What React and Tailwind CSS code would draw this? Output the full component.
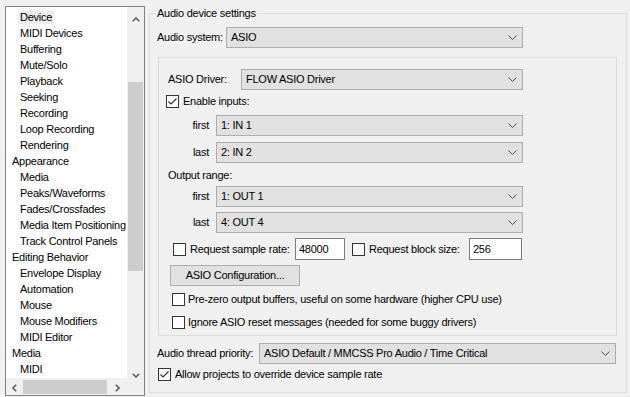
import React from "react";

const tree = [
  ["Device", 1, true],
  ["MIDI Devices", 1],
  ["Buffering", 1],
  ["Mute/Solo", 1],
  ["Playback", 1],
  ["Seeking", 1],
  ["Recording", 1],
  ["Loop Recording", 1],
  ["Rendering", 1],
  ["Appearance", 0],
  ["Media", 1],
  ["Peaks/Waveforms", 1],
  ["Fades/Crossfades", 1],
  ["Media Item Positioning", 1],
  ["Track Control Panels", 1],
  ["Editing Behavior", 0],
  ["Envelope Display", 1],
  ["Automation", 1],
  ["Mouse", 1],
  ["Mouse Modifiers", 1],
  ["MIDI Editor", 1],
  ["Media", 0],
  ["MIDI", 1],
];

function Chevron() {
  return (
    <svg width="9" height="5" viewBox="0 0 9 5" className="shrink-0">
      <polyline points="0.5,0.5 4.5,4.5 8.5,0.5" fill="none" stroke="#4a4a4a" strokeWidth="1" />
    </svg>
  );
}

function Select({ value, className }) {
  return (
    <div className={"h-[21px] border border-[#adadad] bg-[#e1e1e1] flex items-center pl-[4px] pr-[5px] " + className}>
      <span className="flex-1 whitespace-nowrap">{value}</span>
      <Chevron />
    </div>
  );
}

function Check({ checked }) {
  return (
    <div className="w-[13px] h-[13px] border border-[#333333] bg-white shrink-0 flex items-center justify-center">
      {checked && (
        <svg width="11" height="11" viewBox="0 0 11 11">
          <polyline points="1.5,5.5 4,8 9.5,2.5" fill="none" stroke="#333333" strokeWidth="1.2" />
        </svg>
      )}
    </div>
  );
}

function ArrowUp() {
  return (
    <svg width="8" height="5" viewBox="0 0 8 5">
      <polyline points="0.8,4.2 4,1 7.2,4.2" fill="none" stroke="#606060" strokeWidth="1.6" />
    </svg>
  );
}
function ArrowDown() {
  return (
    <svg width="8" height="5" viewBox="0 0 8 5">
      <polyline points="0.8,0.8 4,4 7.2,0.8" fill="none" stroke="#606060" strokeWidth="1.6" />
    </svg>
  );
}
function ArrowLeft() {
  return (
    <svg width="5" height="8" viewBox="0 0 5 8">
      <polyline points="4.2,0.8 1,4 4.2,7.2" fill="none" stroke="#606060" strokeWidth="1.6" />
    </svg>
  );
}
function ArrowRight() {
  return (
    <svg width="5" height="8" viewBox="0 0 5 8">
      <polyline points="0.8,0.8 4,4 0.8,7.2" fill="none" stroke="#606060" strokeWidth="1.6" />
    </svg>
  );
}

export default function App() {
  return (
    <div
      className="w-[630px] h-[397px] bg-[#f0f0f0] flex text-black text-[11px] leading-[13px] tracking-[-0.25px] overflow-hidden"
      style={{ fontFamily: '"Liberation Sans", Arial, sans-serif' }}
    >
      {/* Left tree panel */}
      <div className="ml-[5px] mt-[6px] w-[140px] h-[390px] border border-[#828282] bg-white flex flex-col shrink-0">
        <div className="flex h-[371px]">
          <div className="flex-1 overflow-hidden pt-[2px]">
            {tree.map(([label, lvl, sel], i) => (
              <div
                key={i}
                className={"h-[16px] flex items-center whitespace-nowrap " + (lvl ? "pl-[12px]" : "pl-[4px]")}
              >
                <span className={"px-[2px] leading-[13px] " + (sel ? "bg-[#ececec]" : "")}>{label}</span>
              </div>
            ))}
          </div>
          <div className="w-[17px] bg-[#f0f0f0] flex flex-col">
            <div className="h-[19px] flex items-end justify-center pb-[4px]">
              <ArrowUp />
            </div>
            <div className="h-[56px]" />
            <div className="h-[189px] mx-[1px] bg-[#cdcdcd]" />
            <div className="flex-1 flex items-end justify-center pb-[0px]">
              <ArrowDown />
            </div>
          </div>
        </div>
        <div className="h-[17px] bg-[#f0f0f0] flex items-center">
          <div className="w-[17px] flex items-center justify-center pt-[2px]">
            <ArrowLeft />
          </div>
          <div className="w-[84px] h-[14px] mt-[1px] bg-[#cdcdcd]" />
          <div className="w-[20px] flex items-center justify-center pt-[2px]">
            <ArrowRight />
          </div>
          <div className="flex-1" />
        </div>
      </div>

      {/* Right group box */}
      <div className="ml-[4px] mt-[13px] w-[478px] h-[380px] border border-[#dcdcdc] flex flex-col shrink-0">
        <div className="-mt-[7px] ml-[6px] h-[13px] self-start bg-[#f0f0f0] px-[1px] whitespace-nowrap">
          Audio device settings
        </div>

        <div className="mt-[7px] ml-[7px] flex items-center">
          <span className="w-[69px] whitespace-nowrap">Audio system:</span>
          <Select value="ASIO" className="w-[297px]" />
        </div>

        {/* inner box */}
        <div className="mt-[9px] ml-[8px] w-[459px] h-[279px] border border-[#dcdcdc] flex flex-col">
          <div className="mt-[11px] ml-[9px] flex items-center">
            <span className="w-[73px] whitespace-nowrap">ASIO Driver:</span>
            <Select value="FLOW ASIO Driver" className="w-[282px]" />
          </div>

          <div className="mt-[5px] ml-[7px] flex items-center gap-[4px]">
            <Check checked />
            <span className="whitespace-nowrap">Enable inputs:</span>
          </div>

          <div className="mt-[7px] flex items-center">
            <span className="w-[50px] text-right">first</span>
            <Select value="1: IN 1" className="ml-[7px] w-[307px]" />
          </div>
          <div className="mt-[6px] flex items-center">
            <span className="w-[50px] text-right">last</span>
            <Select value="2: IN 2" className="ml-[7px] w-[307px]" />
          </div>

          <div className="mt-[4px] ml-[9px] h-[16px] flex items-center whitespace-nowrap">Output range:</div>

          <div className="mt-[3px] flex items-center">
            <span className="w-[50px] text-right">first</span>
            <Select value="1: OUT 1" className="ml-[7px] w-[307px]" />
          </div>
          <div className="mt-[5px] flex items-center">
            <span className="w-[50px] text-right">last</span>
            <Select value="4: OUT 4" className="ml-[7px] w-[307px]" />
          </div>

          <div className="mt-[5px] ml-[14px] flex items-center">
            <Check />
            <span className="ml-[4px] w-[105px] whitespace-nowrap">Request sample rate:</span>
            <div className="w-[50px] h-[22px] border border-[#7a7a7a] bg-white pl-[3px] flex items-center">48000</div>
            <div className="ml-[7px]">
              <Check />
            </div>
            <span className="ml-[4px] w-[100px] whitespace-nowrap">Request block size:</span>
            <div className="w-[53px] h-[22px] border border-[#7a7a7a] bg-white pl-[3px] flex items-center">256</div>
          </div>

          <div className="mt-[5px] ml-[11px] w-[130px] h-[21px] border border-[#adadad] bg-[#e1e1e1] flex items-center justify-center whitespace-nowrap">
            ASIO Configuration...
          </div>

          <div className="mt-[7px] ml-[13px] flex items-center gap-[3px]">
            <Check />
            <span className="whitespace-nowrap">Pre-zero output buffers, useful on some hardware (higher CPU use)</span>
          </div>
          <div className="mt-[10px] ml-[13px] flex items-center gap-[3px]">
            <Check />
            <span className="whitespace-nowrap">Ignore ASIO reset messages (needed for some buggy drivers)</span>
          </div>
        </div>

        <div className="mt-[7px] ml-[7px] flex items-center">
          <span className="w-[102px] whitespace-nowrap">Audio thread priority:</span>
          <Select value="ASIO Default / MMCSS Pro Audio / Time Critical" className="w-[357px]" />
        </div>

        <div className="mt-[4px] ml-[8px] flex items-center gap-[4px]">
          <Check checked />
          <span className="whitespace-nowrap">Allow projects to override device sample rate</span>
        </div>
      </div>
    </div>
  );
}
